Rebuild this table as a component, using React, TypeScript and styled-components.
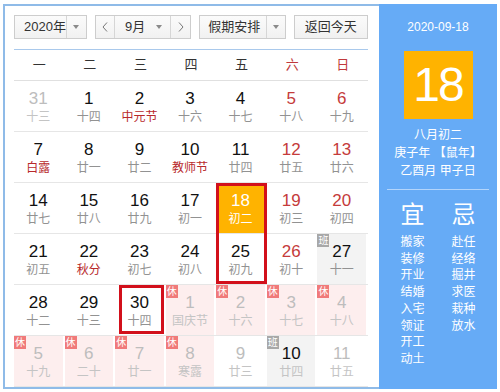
import React from 'react';
import styled, { createGlobalStyle, css } from 'styled-components';

const Global = createGlobalStyle`
  html, body { margin: 0; padding: 0; background: #fff; }
  body { font-family: "Liberation Sans", "Noto Sans CJK SC", sans-serif; }
  * { box-sizing: border-box; }
`;

const Frame = styled.div`
  display: flex;
  width: 494px;
  height: 385px;
  margin: 4px 0 0 3px;
`;

const Main = styled.div`
  width: 376px;
  height: 385px;
  border: 2px solid #8fbbe8;
  border-right: none;
  padding: 9px 11px 0 9px;
  display: flex;
  flex-direction: column;
`;

const Toolbar = styled.div`
  display: flex;
  gap: 8px;
  height: 24px;
`;

const SelectBox = styled.div<{ $w: number; $push?: boolean }>`
  width: ${p => p.$w}px;
  height: 24px;
  display: flex;
  border: 1px solid #cdcdcd;
  background: linear-gradient(#fbfbfb, #f1f1f1);
  color: #333;
  font-size: 13px;
  line-height: 22px;
  ${p => p.$push && css`margin-left: auto;`}
`;

const SelectLabel = styled.span<{ $pl: number }>`
  flex: 1;
  padding-left: ${p => p.$pl}px;
  white-space: nowrap;
`;

const ArrowCell = styled.span<{ $w: number; $divider?: boolean }>`
  width: ${p => p.$w}px;
  display: flex;
  align-items: center;
  justify-content: center;
  ${p => p.$divider && css`border-left: 1px solid #d6d6d6;`}
`;

const Caret = styled.span`
  width: 0;
  height: 0;
  border-left: 3.5px solid transparent;
  border-right: 3.5px solid transparent;
  border-top: 4px solid #8a8a8a;
`;

const NavBtn = styled.span<{ $w: number; $side: 'left' | 'right' }>`
  width: ${p => p.$w}px;
  display: flex;
  align-items: center;
  justify-content: center;
  ${p => (p.$side === 'left' ? css`border-right: 1px solid #d6d6d6;` : css`border-left: 1px solid #d6d6d6;`)}
`;

const TextButton = styled.span`
  flex: 1;
  text-align: center;
`;

const ToolbarRule = styled.div`
  height: 1px;
  margin-top: 10px;
  background: #a9c9ec;
`;

const WeekHeader = styled.div`
  display: grid;
  grid-template-columns: repeat(7, 1fr);
  height: 31px;
  border-bottom: 1px solid #e0e0e0;
  font-size: 13px;
  line-height: 30px;
  text-align: center;
`;

const WeekName = styled.span<{ $weekend?: boolean }>`
  color: ${p => (p.$weekend ? '#c0393b' : '#333')};
`;

const Week = styled.div`
  display: grid;
  grid-template-columns: repeat(7, 1fr);
  height: 51px;
  border-bottom: 1px solid #e6e6e6;
`;

type Tag = 'rest' | 'work';

const Cell = styled.div<{ $tag?: Tag; $today?: boolean }>`
  position: relative;
  margin-right: 2px;
  display: flex;
  flex-direction: column;
  align-items: center;
  padding-top: 8px;
  background: ${p => (p.$today ? '#ffb300' : p.$tag === 'rest' ? '#fdeeee' : p.$tag === 'work' ? '#f3f3f3' : 'transparent')};
`;

const Num = styled.span<{ $color: string }>`
  font-size: 17px;
  line-height: 20px;
  color: ${p => p.$color};
`;

const Lunar = styled.span<{ $color: string }>`
  font-size: 12px;
  line-height: 16px;
  color: ${p => p.$color};
  white-space: nowrap;
`;

const Badge = styled.span<{ $tag: Tag }>`
  position: absolute;
  top: 0;
  left: 0;
  width: 12px;
  height: 13px;
  font-size: 10px;
  line-height: 13px;
  text-align: center;
  color: #fff;
  background: ${p => (p.$tag === 'rest' ? '#f07a7a' : '#a8a8a8')};
`;

type Ring = 'top' | 'bottom' | 'all';

const RingBox = styled.span<{ $ring: Ring }>`
  position: absolute;
  top: 0;
  left: ${p => (p.$ring === 'all' ? '4px' : '0')};
  right: ${p => (p.$ring === 'all' ? '0' : '-2px')};
  bottom: ${p => (p.$ring === 'top' ? '-1px' : p.$ring === 'all' ? '1px' : '0')};
  border: 3px solid #d2101b;
  ${p => p.$ring === 'top' && css`border-bottom: none;`}
  ${p => p.$ring === 'bottom' && css`border-top: none;`}
  pointer-events: none;
`;

const Side = styled.div`
  width: 118px;
  height: 385px;
  background: #66abf6;
  color: #fff;
  display: flex;
  flex-direction: column;
  align-items: center;
`;

const DateText = styled.div`
  margin-top: 14px;
  font-size: 12px;
  line-height: 18px;
`;

const BigDay = styled.div`
  margin-top: 15px;
  width: 69px;
  height: 68px;
  background: #ffb300;
  font-size: 48px;
  line-height: 68px;
  letter-spacing: -2px;
  text-align: center;
`;

const LunarInfo = styled.div`
  margin-top: 7px;
  font-size: 12px;
  line-height: 18px;
  text-align: center;
  white-space: pre;
`;

const SideRule = styled.div`
  margin-top: 9px;
  width: 102px;
  height: 1px;
  background: rgba(255, 255, 255, 0.5);
`;

const YiJi = styled.div`
  margin-top: 11px;
  display: flex;
  gap: 27px;
`;

const YiJiCol = styled.div`
  width: 24px;
  display: flex;
  flex-direction: column;
  align-items: center;
`;

const YiJiTitle = styled.div`
  font-size: 24px;
  line-height: 28px;
  margin-bottom: 5px;
`;

const YiJiItem = styled.div`
  font-size: 12px;
  line-height: 16.7px;
  white-space: nowrap;
`;

const Chevron = ({ dir }: { dir: 'l' | 'r' }) => (
  <svg width="6" height="10" viewBox="0 0 6 10">
    <polyline
      points={dir === 'l' ? '5,0.5 1,5 5,9.5' : '1,0.5 5,5 1,9.5'}
      fill="none"
      stroke="#777"
      strokeWidth="1"
    />
  </svg>
);

type Day = {
  n: number;
  l: string;
  other?: boolean;
  weekend?: boolean;
  fest?: boolean;
  tag?: Tag;
  today?: boolean;
  ring?: Ring;
};

const d = (n: number, l: string, o: Partial<Day> = {}): Day => ({ n, l, ...o });
const O = { other: true };
const W = { weekend: true };
const F = { fest: true };
const R: Partial<Day> = { other: true, tag: 'rest' };

const weeks: Day[][] = [
  [d(31, '十三', O), d(1, '十四'), d(2, '中元节', F), d(3, '十六'), d(4, '十七'), d(5, '十八', W), d(6, '十九', W)],
  [d(7, '白露', F), d(8, '廿一'), d(9, '廿二'), d(10, '教师节', F), d(11, '廿四'), d(12, '廿五', W), d(13, '廿六', W)],
  [d(14, '廿七'), d(15, '廿八'), d(16, '廿九'), d(17, '初一'), d(18, '初二', { today: true, ring: 'top' }), d(19, '初三', W), d(20, '初四', W)],
  [d(21, '初五'), d(22, '秋分', F), d(23, '初七'), d(24, '初八'), d(25, '初九', { ring: 'bottom' }), d(26, '初十', W), d(27, '十一', { tag: 'work' })],
  [d(28, '十二'), d(29, '十三'), d(30, '十四', { ring: 'all' }), d(1, '国庆节', R), d(2, '十六', R), d(3, '十七', R), d(4, '十八', R)],
  [d(5, '十九', R), d(6, '二十', R), d(7, '廿一', R), d(8, '寒露', R), d(9, '廿三', O), d(10, '廿四', { other: true, tag: 'work' }), d(11, '廿五', O)],
];

const numColor = (x: Day) => {
  if (x.today) return '#fff';
  if (x.tag === 'work') return '#111';
  if (x.other) return '#bdbdbd';
  if (x.weekend) return '#c53b3b';
  return '#111';
};

const lunarColor = (x: Day) => {
  if (x.today) return '#fff';
  if (x.other) return '#c4c4c4';
  if (x.fest) return '#b8292b';
  return '#929292';
};

const weekNames = ['一', '二', '三', '四', '五', '六', '日'];
const yi = ['搬家', '装修', '开业', '结婚', '入宅', '领证', '开工', '动土'];
const ji = ['赴任', '经络', '掘井', '求医', '栽种', '放水'];

export default function App() {
  return (
    <>
      <Global />
      <Frame>
        <Main>
          <Toolbar>
            <SelectBox $w={73}>
              <SelectLabel $pl={9}>2020年</SelectLabel>
              <ArrowCell $w={22} $divider>
                <Caret />
              </ArrowCell>
            </SelectBox>
            <SelectBox $w={97}>
              <NavBtn $w={19} $side="left">
                <Chevron dir="l" />
              </NavBtn>
              <SelectLabel $pl={10}>9月</SelectLabel>
              <ArrowCell $w={22}>
                <Caret />
              </ArrowCell>
              <NavBtn $w={20} $side="right">
                <Chevron dir="r" />
              </NavBtn>
            </SelectBox>
            <SelectBox $w={87}>
              <SelectLabel $pl={8}>假期安排</SelectLabel>
              <ArrowCell $w={19} $divider>
                <Caret />
              </ArrowCell>
            </SelectBox>
            <SelectBox $w={75} $push>
              <TextButton>返回今天</TextButton>
            </SelectBox>
          </Toolbar>
          <ToolbarRule />
          <WeekHeader>
            {weekNames.map((w, i) => (
              <WeekName key={w} $weekend={i >= 5}>
                {w}
              </WeekName>
            ))}
          </WeekHeader>
          {weeks.map((wk, wi) => (
            <Week key={wi}>
              {wk.map((x, ci) => (
                <Cell key={ci} $tag={x.tag} $today={x.today}>
                  {x.tag && <Badge $tag={x.tag}>{x.tag === 'rest' ? '休' : '班'}</Badge>}
                  <Num $color={numColor(x)}>{x.n}</Num>
                  <Lunar $color={lunarColor(x)}>{x.l}</Lunar>
                  {x.ring && <RingBox $ring={x.ring} />}
                </Cell>
              ))}
            </Week>
          ))}
        </Main>
        <Side>
          <DateText>2020-09-18</DateText>
          <BigDay>18</BigDay>
          <LunarInfo>{'八月初二\n庚子年 【鼠年】\n乙酉月 甲子日'}</LunarInfo>
          <SideRule />
          <YiJi>
            <YiJiCol>
              <YiJiTitle>宜</YiJiTitle>
              {yi.map(t => (
                <YiJiItem key={t}>{t}</YiJiItem>
              ))}
            </YiJiCol>
            <YiJiCol>
              <YiJiTitle>忌</YiJiTitle>
              {ji.map(t => (
                <YiJiItem key={t}>{t}</YiJiItem>
              ))}
            </YiJiCol>
          </YiJi>
        </Side>
      </Frame>
    </>
  );
}
